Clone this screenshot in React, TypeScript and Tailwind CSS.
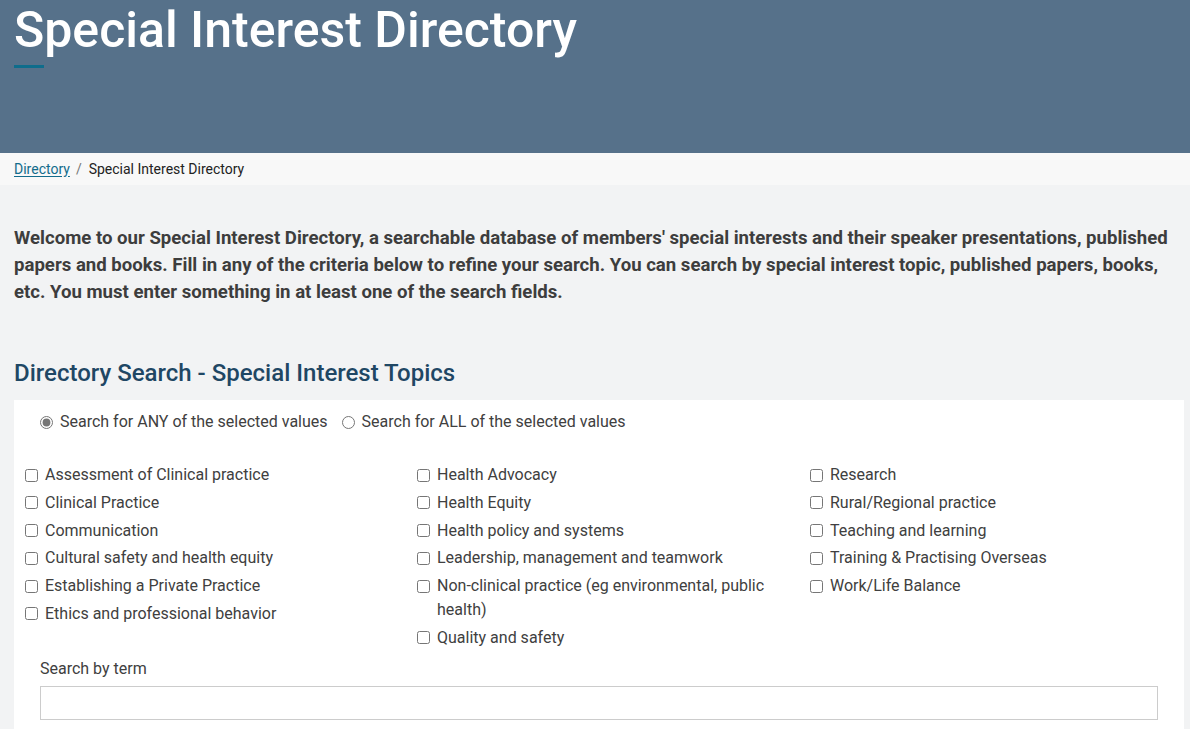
import { useState } from "react";

const col1 = [
  "Assessment of Clinical practice",
  "Clinical Practice",
  "Communication",
  "Cultural safety and health equity",
  "Establishing a Private Practice",
  "Ethics and professional behavior",
];

const col2 = [
  "Health Advocacy",
  "Health Equity",
  "Health policy and systems",
  "Leadership, management and teamwork",
  "Non-clinical practice (eg environmental, public health)",
  "Quality and safety",
];

const col3 = [
  "Research",
  "Rural/Regional practice",
  "Teaching and learning",
  "Training & Practising Overseas",
  "Work/Life Balance",
];

function TopicColumn({ items }: { items: string[] }) {
  return (
    <ul className="flex flex-col gap-[3.75px]">
      {items.map((label) => (
        <li key={label}>
          <label className="flex items-start gap-[7px] leading-6 cursor-pointer">
            <input
              type="checkbox"
              className="m-0 mt-[5.5px] h-[13px] w-[13px] shrink-0 accent-[#767676]"
            />
            <span>{label}</span>
          </label>
        </li>
      ))}
    </ul>
  );
}

export default function App() {
  const [mode, setMode] = useState<"any" | "all">("any");
  const [term, setTerm] = useState("");

  return (
    <div
      className="min-h-screen bg-[#f2f3f4] text-[#404040]"
      style={{ fontFamily: "Roboto, 'Liberation Sans', sans-serif" }}
    >
      <header className="h-[153px] bg-[#56718a] px-[14px] pt-[5px]">
        <h1 className="text-[50px] leading-none font-medium text-white">
          Special Interest Directory
        </h1>
        <div className="mt-[10px] h-[3px] w-[30px] bg-[#0e6d8c]" />
      </header>

      <nav className="flex h-[32px] items-center bg-[#f8f8f8] px-[14px] text-[14px] text-[#222]">
        <a href="#" className="text-[#136c8c] underline underline-offset-2">
          Directory
        </a>
        <span className="mx-[6px] text-[#777]">/</span>
        <span className="ml-[1px]">Special Interest Directory</span>
      </nav>

      <main className="px-[14px] pt-[40px]">
        <p className="w-[1170px] text-[18.6px] leading-[27px] font-bold text-[#3d3d3d]">
          Welcome to our Special Interest Directory, a searchable database of members' special interests and their
          speaker presentations, published papers and books. Fill in any of the criteria below to refine your search.
          You can search by special interest topic, published papers, books, etc. You must enter something in at least
          one of the search fields.
        </p>

        <h2 className="mt-[51px] mb-[11px] text-[24px] leading-8 font-medium text-[#1f4764]">
          Directory Search - Special Interest Topics
        </h2>

        <section className="w-[1170px] bg-white pt-[10px] pb-6 text-[16px]">
          <div className="flex items-center gap-[14px] pl-[26px] leading-6">
            <label className="flex items-center gap-[7px] cursor-pointer">
              <input
                type="radio"
                name="mode"
                checked={mode === "any"}
                onChange={() => setMode("any")}
                className="m-0 h-[13px] w-[13px] accent-[#767676]"
              />
              Search for ANY of the selected values
            </label>
            <label className="flex items-center gap-[7px] cursor-pointer">
              <input
                type="radio"
                name="mode"
                checked={mode === "all"}
                onChange={() => setMode("all")}
                className="m-0 h-[13px] w-[13px] accent-[#767676]"
              />
              Search for ALL of the selected values
            </label>
          </div>

          <div className="mt-[29px] grid grid-cols-[392px_393px_1fr] pl-[11px]">
            <TopicColumn items={col1} />
            <div className="pr-6">
              <TopicColumn items={col2} />
            </div>
            <TopicColumn items={col3} />
          </div>

          <div className="mt-[7px] px-[26px]">
            <label htmlFor="term" className="block leading-6 text-[#404040]">
              Search by term
            </label>
            <input
              id="term"
              value={term}
              onChange={(e) => setTerm(e.target.value)}
              className="mt-[5px] block h-[34px] w-full border border-[#cccccc] bg-white px-2 outline-none"
            />
          </div>
        </section>
      </main>
    </div>
  );
}
